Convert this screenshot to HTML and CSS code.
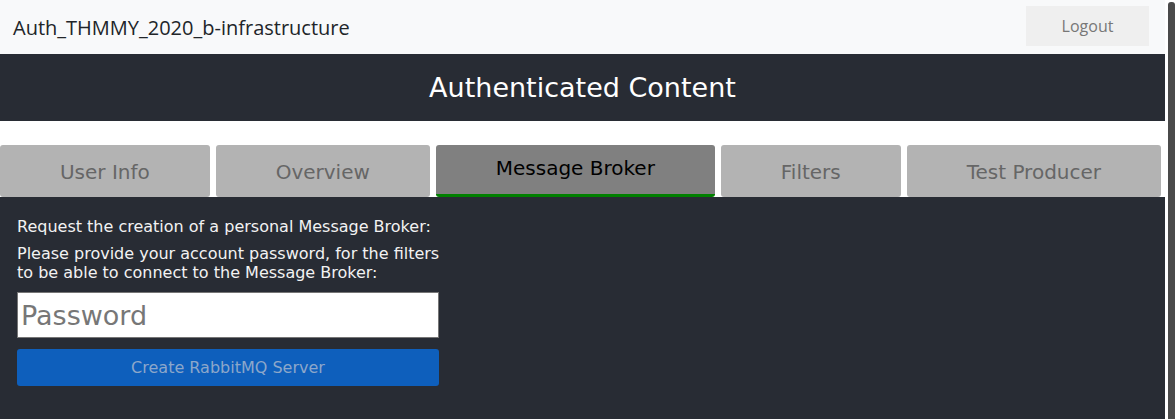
FILE: index.html
```html
<!DOCTYPE html>
<html>
<head>
<meta charset="utf-8">
<link rel="stylesheet" href="styles.css">
</head>
<body>
<div class="page">
  <nav class="navbar">
    <span class="brand">Auth_THMMY_2020_b-infrastructure</span>
    <button class="logout">Logout</button>
  </nav>
  <header class="app-header">Authenticated Content</header>
  <div class="tabs">
    <div class="tab">User Info</div>
    <div class="tab">Overview</div>
    <div class="tab active">Message Broker</div>
    <div class="tab">Filters</div>
    <div class="tab">Test Producer</div>
  </div>
  <main class="panel">
    <p class="line first">Request the creation of a personal Message Broker:</p>
    <p class="line">Please provide your account password, for the filters to be able to connect to the Message Broker:</p>
    <input class="password" type="password" placeholder="Password">
    <button class="create" disabled>Create RabbitMQ Server</button>
  </main>
</div>
<div class="scrollbar"><div class="thumb"></div></div>
</body>
</html>
```
FILE: styles.css
```css
html, body {
  margin: 0;
  height: 100%;
  overflow: hidden;
}
body {
  display: flex;
  background: #fff;
  font-family: "DejaVu Sans", sans-serif;
}
.page {
  width: 1165px;
  display: flex;
  flex-direction: column;
  height: 419px;
}
.scrollbar {
  width: 10px;
  background: #fff;
  display: flex;
  padding-top: 2px;
  padding-left: 3px;
  box-sizing: border-box;
}
.thumb {
  flex: 1;
  background: #4a4a4a;
  border-radius: 3px 3px 0 0;
}
.navbar {
  height: 54px;
  background: #f8f9fa;
  display: flex;
  align-items: center;
  justify-content: space-between;
  padding: 0 16px 0 13px;
  box-sizing: border-box;
}
.brand {
  font-family: "Open Sans", sans-serif;
  font-size: 20px;
  color: #212529;
}
.logout {
  width: 123px;
  height: 40px;
  margin-top: -2px;
  background: #efefef;
  border: none;
  color: #777;
  font-family: "Open Sans", sans-serif;
  font-size: 16px;
}
.app-header {
  height: 67px;
  background: #282c34;
  color: #fff;
  font-size: 27px;
  display: flex;
  align-items: center;
  justify-content: center;
}
.tabs {
  display: flex;
  gap: 6px;
  padding: 24px 4px 0 0;
}
.tab {
  flex: 1 1 auto;
  height: 52px;
  box-sizing: border-box;
  background: #b3b3b3;
  color: #666;
  border-radius: 3px;
  font-size: 20px;
  display: flex;
  align-items: center;
  justify-content: center;
  padding-top: 1px;
}
.tab.active {
  background: #808080;
  color: #000;
  border-bottom: 3px solid #008000;
  padding-top: 0;
  padding-bottom: 3px;
}
.panel {
  flex: 1;
  background: #282c34;
  color: #f2f2f2;
  padding: 20px 0 0 17px;
  display: flex;
  flex-direction: column;
  align-items: flex-start;
}
.line {
  width: 430px;
  margin: 0 0 8px;
  font-size: 16px;
  line-height: 19px;
}
.line + .line {
  margin-bottom: 10px;
}
.password {
  width: 422px;
  height: 46px;
  box-sizing: border-box;
  margin: 0;
  border: 1px solid #767676;
  border-radius: 0;
  padding: 0 3px;
  font-family: "DejaVu Sans", sans-serif;
  font-size: 27px;
}
.password::placeholder {
  color: #777;
}
.create {
  width: 422px;
  height: 37px;
  margin-top: 11px;
  border: none;
  border-radius: 3px;
  background: #0e5fbc;
  color: #8ca7ca;
  font-family: "DejaVu Sans", sans-serif;
  font-size: 16px;
}
```
